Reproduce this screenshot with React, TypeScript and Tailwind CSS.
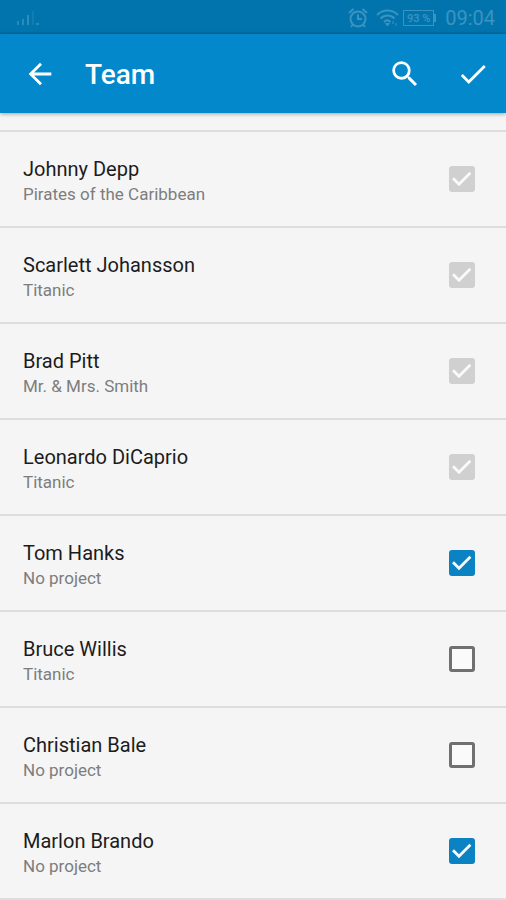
import React, { useState } from 'react';
import { MdArrowBack, MdCheck, MdSearch } from 'react-icons/md';

interface Member {
    id: string;
    name: string;
    project: string;
    selected: boolean;
    locked?: boolean;
}

const initialMembers: Member[] = [
    { id: 'depp', name: 'Johnny Depp', project: 'Pirates of the Caribbean', selected: true, locked: true },
    { id: 'johansson', name: 'Scarlett Johansson', project: 'Titanic', selected: true, locked: true },
    { id: 'pitt', name: 'Brad Pitt', project: 'Mr. & Mrs. Smith', selected: true, locked: true },
    { id: 'dicaprio', name: 'Leonardo DiCaprio', project: 'Titanic', selected: true, locked: true },
    { id: 'hanks', name: 'Tom Hanks', project: 'No project', selected: true },
    { id: 'willis', name: 'Bruce Willis', project: 'Titanic', selected: false },
    { id: 'bale', name: 'Christian Bale', project: 'No project', selected: false },
    { id: 'brando', name: 'Marlon Brando', project: 'No project', selected: true },
];

const SignalIcon = () => (
    <svg width="24" height="18" viewBox="0 0 24 18" fill="currentColor" aria-hidden="true">
        <rect x="1" y="12" width="2" height="4" opacity="0.7" />
        <rect x="6" y="10" width="2" height="6" opacity="0.7" />
        <rect x="11" y="6" width="2" height="10" opacity="0.8" />
        <rect x="16" y="2" width="2" height="14" opacity="0.25" />
        <rect x="20" y="14" width="3" height="2" opacity="0.7" />
    </svg>
);

const AlarmIcon = () => (
    <svg width="20" height="20" viewBox="0 0 20 20" fill="none" stroke="currentColor" strokeWidth="2" aria-hidden="true">
        <circle cx="10" cy="11" r="7.5" />
        <path d="M10 6.5V11h4M1 5l4.5-4M19 5l-4.5-4M5 16.5l-2 2.5M15 16.5l2 2.5" />
    </svg>
);

const WifiIcon = () => (
    <svg width="23" height="18" viewBox="0 0 23 18" fill="none" stroke="currentColor" strokeWidth="2" aria-hidden="true">
        <path d="M1 6c6-6 15-6 21 0M4.5 9.5c4-4 10-4 14 0M8 13c2-2 4.5-2 6.5 0" />
        <path d="M9.5 14.5h4l-2 2.5zM17 12v3M20 14v3" fill="currentColor" strokeWidth="1" />
    </svg>
);

const StatusBar = () => (
    <div className="flex h-[34px] items-center border-b-2 border-[#016da4] bg-[#0274ad] pt-1 pr-[11px] pl-4 text-[#3a94c1]">
        <SignalIcon />
        <div className="ml-auto flex items-center">
            <AlarmIcon />
            <span className="ml-2 flex">
                <WifiIcon />
            </span>
            <span className="ml-1 flex h-4 w-[31px] items-center justify-center border border-current text-[11px] leading-none font-medium">
                93 %
            </span>
            <span className="h-2 w-[2px] bg-current" />
            <span className="ml-[9px] text-xl leading-6">09:04</span>
        </div>
    </div>
);

const AppBar = () => (
    <header className="relative flex h-[79px] items-center bg-[#0288cb] pr-4 pl-[23px] text-white shadow-[0_1px_4px_rgba(0,0,0,0.35)]">
        <button type="button" aria-label="Back">
            <MdArrowBack size={34} />
        </button>
        <h1 className="ml-7 pt-[2px] text-[28px] leading-8 font-medium">Team</h1>
        <div className="ml-auto flex gap-[34px]">
            <button type="button" aria-label="Search">
                <MdSearch size={34} />
            </button>
            <button type="button" aria-label="Done">
                <MdCheck size={34} />
            </button>
        </div>
    </header>
);

const MemberRow: React.FC<{ member: Member; onToggle: (id: string) => void }> = ({ member, onToggle }) => {
    return (
        <li className="border-b-2 border-[#dedede]">
            <label htmlFor={member.id} className="flex h-[94px] items-center justify-between pr-[31px] pl-[23px]">
                <span className="flex flex-col pt-1">
                    <span className="text-xl leading-[26px] text-[#1c1c1c]">{member.name}</span>
                    <span className="text-[17px] leading-6 text-[#7d7d7d]">{member.project}</span>
                </span>
                <span className="relative flex">
                    <input
                        id={member.id}
                        type="checkbox"
                        checked={member.selected}
                        disabled={member.locked}
                        onChange={() => onToggle(member.id)}
                        className="size-[26px] appearance-none rounded-[3px] border-3 border-[#707070] bg-[#fafafa] checked:border-[#0b83c2] checked:bg-[#0b83c2] disabled:border-[#d0d0d0] disabled:bg-[#d0d0d0]"
                    />
                    {member.selected && (
                        <svg
                            viewBox="0 0 26 26"
                            className="pointer-events-none absolute inset-0 size-[26px]"
                            fill="none"
                            stroke="#fafafa"
                            strokeWidth="2.8"
                            aria-hidden="true"
                        >
                            <path d="M4 12.2l6 6L21.4 6.8" />
                        </svg>
                    )}
                </span>
            </label>
        </li>
    );
};

const App: React.FC = () => {
    const [members, setMembers] = useState<Member[]>(initialMembers);

    const handleToggle = (id: string) => {
        setMembers(members.map((m) => (m.id === id ? { ...m, selected: !m.selected } : m)));
    };

    return (
        <div className="min-h-screen bg-[#f5f5f5] font-['Roboto',sans-serif]">
            <StatusBar />
            <AppBar />
            <ul className="mt-[17px] border-t-2 border-[#dedede]">
                {members.map((member) => (
                    <MemberRow key={member.id} member={member} onToggle={handleToggle} />
                ))}
            </ul>
        </div>
    );
};

export default App;
